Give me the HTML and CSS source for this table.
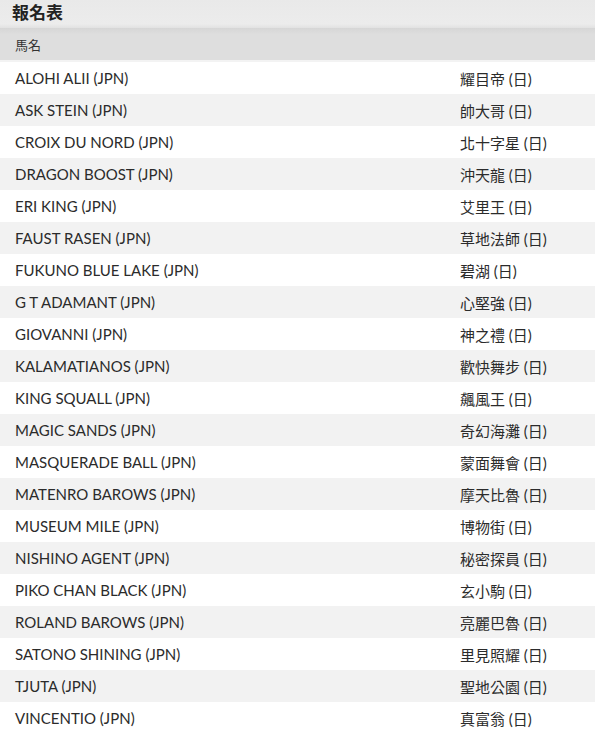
FILE: index.html
```html
<!DOCTYPE html>
<html lang="zh-Hant">
<head>
<meta charset="utf-8">
<link rel="stylesheet" href="styles.css">
</head>
<body>
<div class="panel">
  <h2 class="title">報名表</h2>
  <table class="entries">
    <thead>
      <tr><th class="col-name">馬名</th><th class="col-cn"></th></tr>
    </thead>
    <tbody>
      <tr><td>ALOHI ALII (JPN)</td><td>耀目帝 (日)</td></tr>
      <tr><td>ASK STEIN (JPN)</td><td>帥大哥 (日)</td></tr>
      <tr><td>CROIX DU NORD (JPN)</td><td>北十字星 (日)</td></tr>
      <tr><td>DRAGON BOOST (JPN)</td><td>沖天龍 (日)</td></tr>
      <tr><td>ERI KING (JPN)</td><td>艾里王 (日)</td></tr>
      <tr><td>FAUST RASEN (JPN)</td><td>草地法師 (日)</td></tr>
      <tr><td>FUKUNO BLUE LAKE (JPN)</td><td>碧湖 (日)</td></tr>
      <tr><td>G T ADAMANT (JPN)</td><td>心堅強 (日)</td></tr>
      <tr><td>GIOVANNI (JPN)</td><td>神之禮 (日)</td></tr>
      <tr><td>KALAMATIANOS (JPN)</td><td>歡快舞步 (日)</td></tr>
      <tr><td>KING SQUALL (JPN)</td><td>飆風王 (日)</td></tr>
      <tr><td>MAGIC SANDS (JPN)</td><td>奇幻海灘 (日)</td></tr>
      <tr><td>MASQUERADE BALL (JPN)</td><td>蒙面舞會 (日)</td></tr>
      <tr><td>MATENRO BAROWS (JPN)</td><td>摩天比魯 (日)</td></tr>
      <tr><td>MUSEUM MILE (JPN)</td><td>博物街 (日)</td></tr>
      <tr><td>NISHINO AGENT (JPN)</td><td>秘密探員 (日)</td></tr>
      <tr><td>PIKO CHAN BLACK (JPN)</td><td>玄小駒 (日)</td></tr>
      <tr><td>ROLAND BAROWS (JPN)</td><td>亮麗巴魯 (日)</td></tr>
      <tr><td>SATONO SHINING (JPN)</td><td>里見照耀 (日)</td></tr>
      <tr><td>TJUTA (JPN)</td><td>聖地公園 (日)</td></tr>
      <tr><td>VINCENTIO (JPN)</td><td>真富翁 (日)</td></tr>
    </tbody>
  </table>
</div>
</body>
</html>
```
FILE: styles.css
```css
html, body {
  margin: 0;
  padding: 0;
  background: #fff;
}
body {
  font-family: "Lato", "Noto Sans CJK TC", sans-serif;
  color: #2b2b2b;
}
.panel {
  width: 595px;
}
.title {
  margin: 0;
  height: 28px;
  box-sizing: border-box;
  padding: 0 12px;
  font-size: 17px;
  line-height: 26px;
  font-weight: bold;
  color: #222;
  background: linear-gradient(#e9e9e9, #ececec 85%, #e2e2e2);
}
.entries {
  width: 100%;
  border-collapse: separate;
  border-spacing: 0;
  font-size: 15px;
}
.entries th {
  height: 32px;
  padding: 0 0 0 15px;
  text-align: left;
  font-weight: normal;
  font-size: 13px;
  color: #333;
  background: linear-gradient(#d6d6d6, #dedede 20%, #dedede);
  border-bottom: 2px solid #f3f3f3;
  box-sizing: content-box;
}
.entries td {
  height: 32px;
  padding: 0 0 0 15px;
  box-sizing: border-box;
  white-space: nowrap;
}
.entries td:nth-child(2) {
  width: 135px;
  padding-left: 0;
}
.entries tbody tr:nth-child(even) td {
  background: #f2f2f2;
}
```
